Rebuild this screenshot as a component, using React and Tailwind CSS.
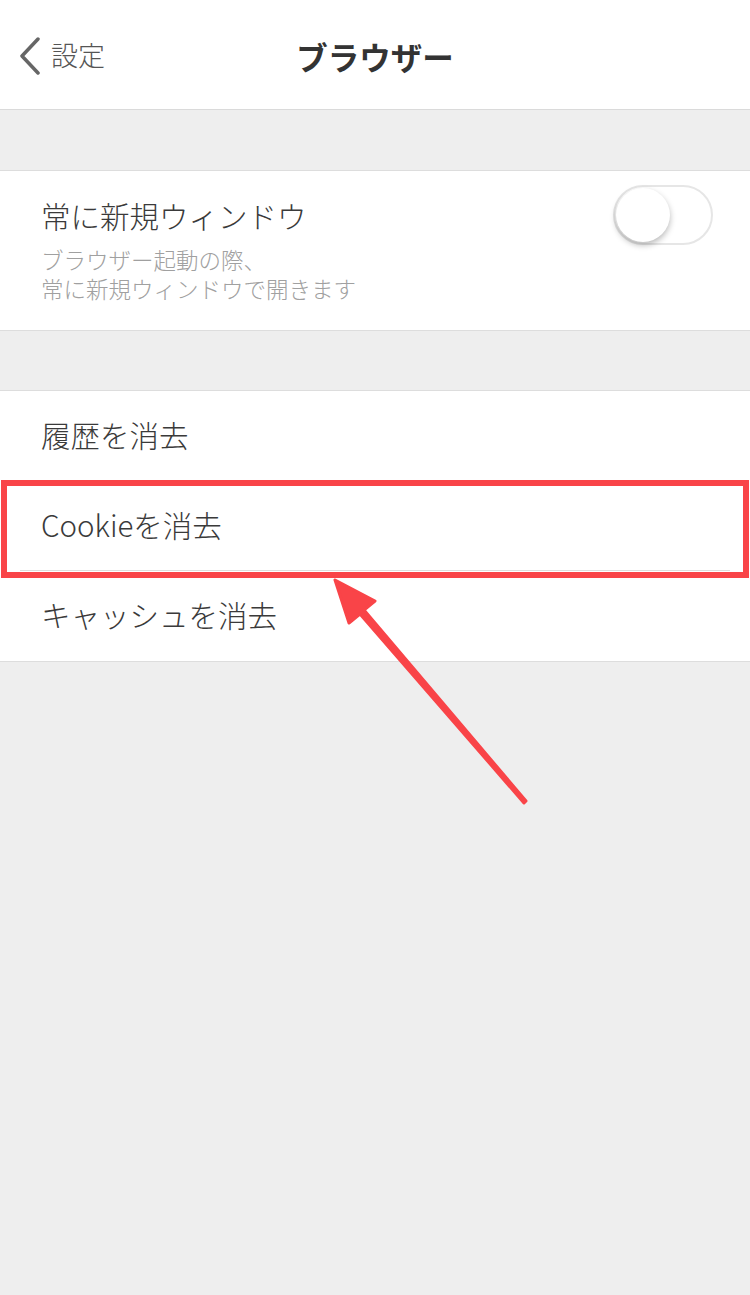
import React from "react";

const font = { fontFamily: '"Noto Sans CJK JP", "Noto Sans", sans-serif' };

function Row({ children, divider }) {
  return (
    <div className="relative h-[90px] flex items-center pl-[41px] pb-[3px] text-[29.5px] font-light text-[#3a3a3a]">
      {children}
      {divider && (
        <div className="absolute bottom-0 left-[20px] right-[20px] h-px bg-[#dddddd]" />
      )}
    </div>
  );
}

export default function App() {
  return (
    <div className="relative w-[750px] h-[1295px] bg-[#eeeeee] overflow-hidden" style={font}>
      {/* header */}
      <div className="relative h-[110px] bg-white border-b border-[#dadada] flex items-center">
        <div className="flex items-center pl-[18px] pt-[2px]">
          <svg width="24" height="38" viewBox="0 0 24 38" fill="none">
            <path d="M20 2 L4 19 L20 36" stroke="#666" strokeWidth="3.5" strokeLinecap="round" strokeLinejoin="round" />
          </svg>
          <span className="ml-[9px] text-[27px] font-light text-[#555]">設定</span>
        </div>
        <div className="absolute inset-x-0 text-center text-[31.5px] font-bold text-[#333] pt-[4px]">
          ブラウザー
        </div>
      </div>

      <div className="h-[60px]" />

      {/* section 1 */}
      <div className="bg-white border-t border-b border-[#dddddd] h-[161px] flex items-start justify-between pl-[41px] pr-[37px]">
        <div className="pt-[23px]">
          <div className="text-[29.5px] font-light text-[#3a3a3a] leading-[42px]">常に新規ウィンドウ</div>
          <div className="mt-[9px] text-[22.5px] font-light text-[#a0a0a0] leading-[29px]">
            ブラウザー起動の際、
            <br />
            常に新規ウィンドウで開きます
          </div>
        </div>
        <div className="mt-[14px] w-[100px] h-[60px] rounded-full border-2 border-[#e6e6e6] bg-white relative">
          <div className="absolute left-[1px] top-[1px] w-[54px] h-[54px] rounded-full bg-white shadow-[0_3px_6px_rgba(0,0,0,0.28)]" />
        </div>
      </div>

      <div className="h-[59px]" />

      {/* section 2 */}
      <div className="bg-white border-t border-b border-[#dddddd]">
        <Row divider>履歴を消去</Row>
        <Row divider>Cookieを消去</Row>
        <Row>キャッシュを消去</Row>
      </div>

      {/* highlight box */}
      <div className="absolute left-[1px] top-[480px] w-[748px] h-[98px] border-[6px] border-[#f94448]" />

      {/* arrow */}
      <svg className="absolute left-0 top-0" width="750" height="1295" viewBox="0 0 750 1295">
        <polygon
          points="335,580 375,601 364,610 526,801 524,803 360,614 349,623"
          fill="#f94448"
          stroke="#f94448"
          strokeWidth="3"
          strokeLinejoin="round"
        />
      </svg>
    </div>
  );
}
